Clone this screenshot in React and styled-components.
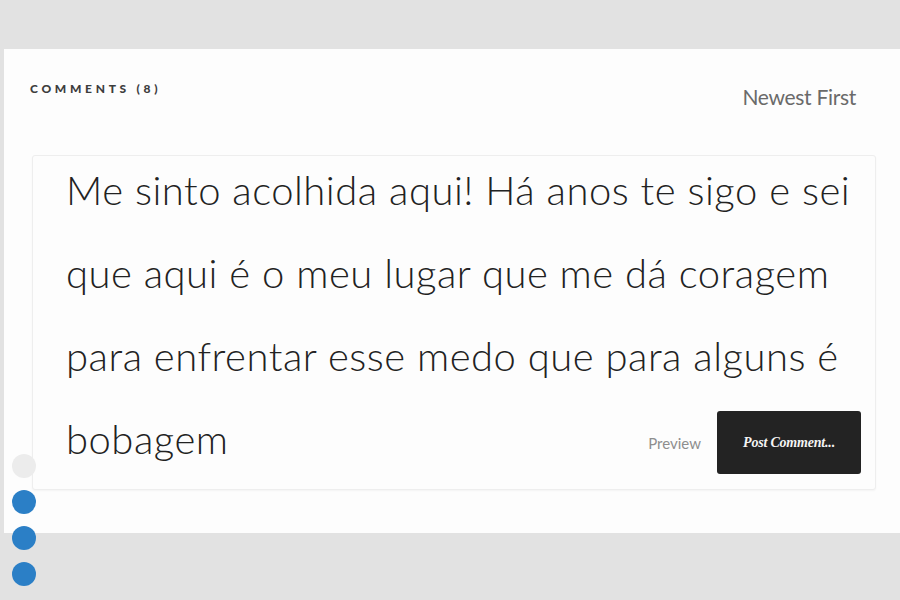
import React from 'react';
import styled, {createGlobalStyle} from 'styled-components';

const GlobalStyle = createGlobalStyle`
  html, body {
    margin: 0;
    padding: 0;
    background: #e2e2e2;
  }
  #root {
    height: 600px;
    overflow: hidden;
  }
`;

const Page = styled.div`
  position: relative;
  height: 600px;
  padding-top: 49px;
  box-sizing: border-box;
`;

const Panel = styled.section`
  background: #fdfdfd;
  margin-left: 4px;
  height: 484px;
  display: flex;
  flex-direction: column;
`;

const Header = styled.div`
  display: flex;
  justify-content: space-between;
  align-items: flex-start;
  padding: 33px 44px 0 26px;
  box-sizing: border-box;
  height: 106px;
`;

const Title = styled.h2`
  margin: 0;
  font-family: "Lato", sans-serif;
  font-weight: 900;
  font-size: 12px;
  letter-spacing: 3.7px;
  color: #3d3d3d;
  line-height: 13px;
`;

const Sort = styled.span`
  margin-top: 2px;
  font-family: "Lato", sans-serif;
  font-weight: 400;
  font-size: 21px;
  letter-spacing: -0.3px;
  color: #6a6a6a;
`;

const Card = styled.div`
  margin: 0 24px 0 28px;
  height: 335px;
  border: 1px solid #eeeeee;
  border-radius: 3px;
  background: #fdfdfd;
  box-shadow: 0 1px 2px rgba(0, 0, 0, 0.04);
  box-sizing: border-box;
  padding: 0 14px 0 33px;
  font-family: "Lato", sans-serif;
  font-weight: 300;
  font-size: 40px;
  line-height: 83px;
  color: #222;
  letter-spacing: 0.5px;
`;

const Body = styled.p`
  margin: -7px 0 0;
`;

const LastRow = styled.div`
  display: flex;
  justify-content: space-between;
  align-items: flex-start;
`;

const Actions = styled.div`
  margin-top: 13px;
  display: flex;
  align-items: center;
  gap: 16px;
  line-height: normal;
  letter-spacing: normal;
`;

const Preview = styled.span`
  font-family: "Lato", sans-serif;
  font-weight: 400;
  font-size: 15px;
  color: #8e8e8e;
`;

const PostButton = styled.button`
  width: 144px;
  height: 63px;
  border: none;
  border-radius: 3px;
  background: #232323;
  color: #f4f4f4;
  font-family: "Liberation Serif", serif;
  font-style: italic;
  font-weight: 700;
  font-size: 14px;
  letter-spacing: -0.2px;
`;

const Dots = styled.div`
  position: absolute;
  left: 12px;
  top: 454px;
  display: flex;
  flex-direction: column;
  gap: 12px;
`;

const Dot = styled.span`
  width: 24px;
  height: 24px;
  border-radius: 50%;
  background: ${p => (p.$active ? '#2b7fc6' : '#ececec')};
`;

export default function App() {
  return (
    <Page>
      <GlobalStyle />
      <Panel>
        <Header>
          <Title>COMMENTS (8)</Title>
          <Sort>Newest First</Sort>
        </Header>
        <Card>
          <Body>
            Me sinto acolhida aqui! Há anos te sigo e sei que aqui é o meu lugar que me dá coragem
            para enfrentar esse medo que para alguns é
          </Body>
          <LastRow>
            <span>bobagem</span>
            <Actions>
              <Preview>Preview</Preview>
              <PostButton>Post Comment...</PostButton>
            </Actions>
          </LastRow>
        </Card>
      </Panel>
      <Dots>
        <Dot />
        <Dot $active />
        <Dot $active />
        <Dot $active />
      </Dots>
    </Page>
  );
}
